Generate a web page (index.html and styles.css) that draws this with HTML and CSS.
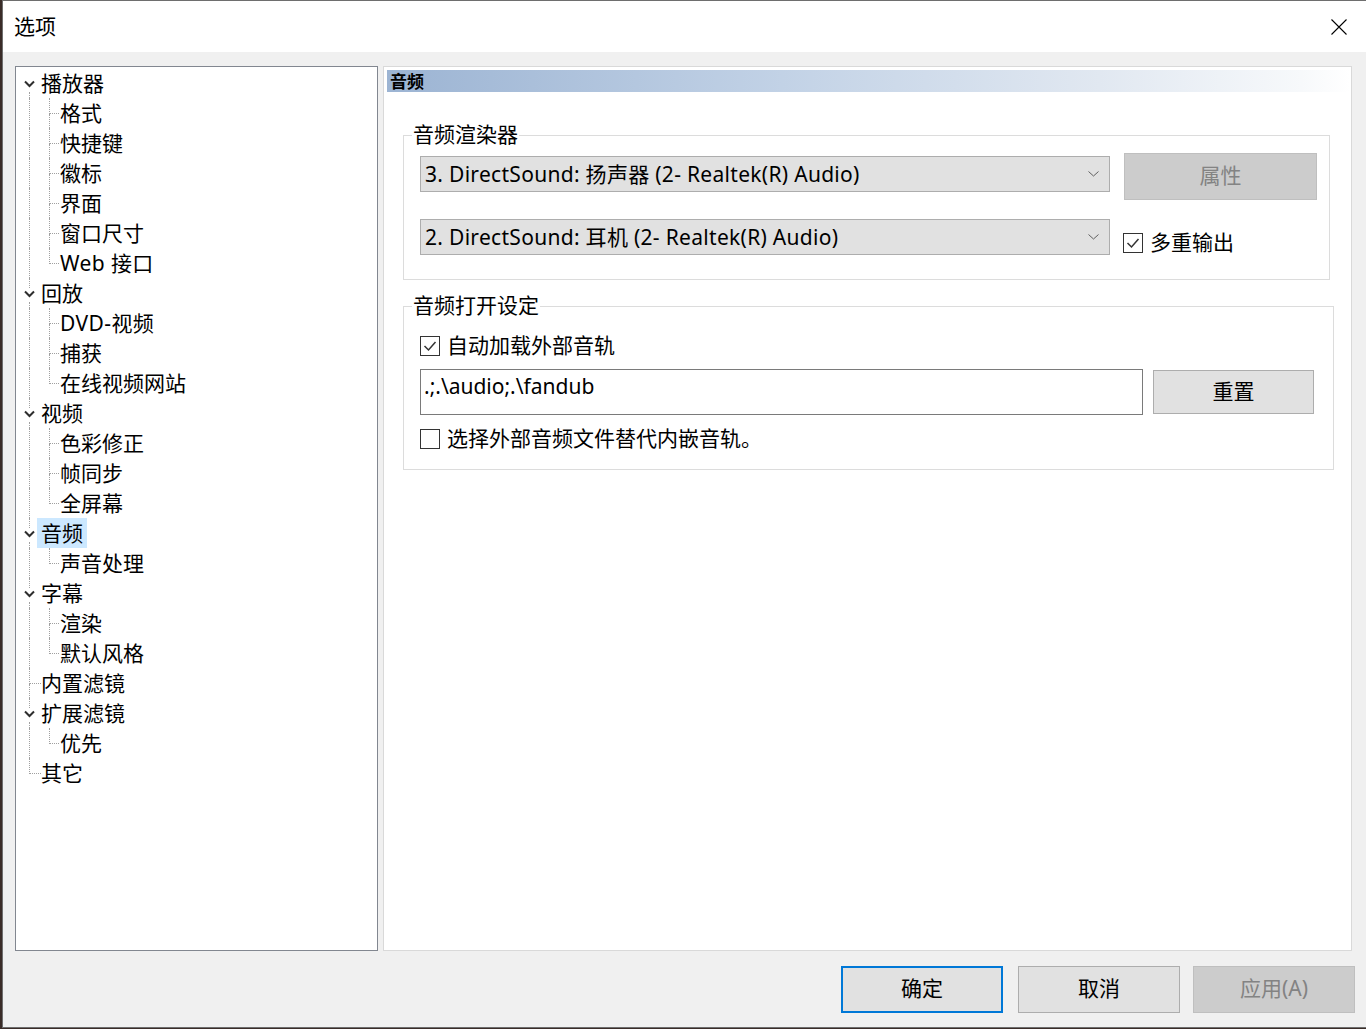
FILE: index.html
```html
<!DOCTYPE html>
<html lang="zh-CN">
<head>
<meta charset="utf-8">
<title>选项</title>
<link rel="stylesheet" href="styles.css">
</head>
<body>
<div class="window">
  <header class="titlebar">
    <span class="title">选项</span>
    <svg class="close" width="16" height="16" viewBox="0 0 16 16"><path d="M0.5 0.5 L15.5 15.5 M15.5 0.5 L0.5 15.5" stroke="#000" stroke-width="1.1" fill="none"/></svg>
  </header>
  <div class="client">
    <div class="main">
      <nav class="tree">
        <div class="node"><span class="g1 exp first"><i class="up"></i><svg class="chev" width="25" height="12" viewBox="0 0 25 12"><path d="M9 3.5 L13.5 8 L18 3.5" /></svg><i class="down"></i></span><span class="lbl">播放器</span></div>
        <div class="node"><span class="g1 pass"><i class="v"></i></span><span class="g2"><i class="h"></i><i class="v"></i></span><span class="lbl">格式</span></div>
        <div class="node"><span class="g1 pass"><i class="v"></i></span><span class="g2"><i class="h"></i><i class="v"></i></span><span class="lbl">快捷键</span></div>
        <div class="node"><span class="g1 pass"><i class="v"></i></span><span class="g2"><i class="h"></i><i class="v"></i></span><span class="lbl">徽标</span></div>
        <div class="node"><span class="g1 pass"><i class="v"></i></span><span class="g2"><i class="h"></i><i class="v"></i></span><span class="lbl">界面</span></div>
        <div class="node"><span class="g1 pass"><i class="v"></i></span><span class="g2"><i class="h"></i><i class="v"></i></span><span class="lbl">窗口尺寸</span></div>
        <div class="node"><span class="g1 pass"><i class="v"></i></span><span class="g2 last"><i class="h"></i><i class="v"></i></span><span class="lbl latin">Web 接口</span></div>

        <div class="node"><span class="g1 exp"><i class="up"></i><svg class="chev" width="25" height="12" viewBox="0 0 25 12"><path d="M9 3.5 L13.5 8 L18 3.5" /></svg><i class="down"></i></span><span class="lbl">回放</span></div>
        <div class="node"><span class="g1 pass"><i class="v"></i></span><span class="g2"><i class="h"></i><i class="v"></i></span><span class="lbl latin">DVD-视频</span></div>
        <div class="node"><span class="g1 pass"><i class="v"></i></span><span class="g2"><i class="h"></i><i class="v"></i></span><span class="lbl">捕获</span></div>
        <div class="node"><span class="g1 pass"><i class="v"></i></span><span class="g2 last"><i class="h"></i><i class="v"></i></span><span class="lbl">在线视频网站</span></div>

        <div class="node"><span class="g1 exp"><i class="up"></i><svg class="chev" width="25" height="12" viewBox="0 0 25 12"><path d="M9 3.5 L13.5 8 L18 3.5" /></svg><i class="down"></i></span><span class="lbl">视频</span></div>
        <div class="node"><span class="g1 pass"><i class="v"></i></span><span class="g2"><i class="h"></i><i class="v"></i></span><span class="lbl">色彩修正</span></div>
        <div class="node"><span class="g1 pass"><i class="v"></i></span><span class="g2"><i class="h"></i><i class="v"></i></span><span class="lbl">帧同步</span></div>
        <div class="node"><span class="g1 pass"><i class="v"></i></span><span class="g2 last"><i class="h"></i><i class="v"></i></span><span class="lbl">全屏幕</span></div>

        <div class="node"><span class="g1 exp"><i class="up"></i><svg class="chev" width="25" height="12" viewBox="0 0 25 12"><path d="M9 3.5 L13.5 8 L18 3.5" /></svg><i class="down"></i></span><span class="lbl selected">音频</span></div>
        <div class="node"><span class="g1 pass"><i class="v"></i></span><span class="g2 last"><i class="h"></i><i class="v"></i></span><span class="lbl">声音处理</span></div>

        <div class="node"><span class="g1 exp"><i class="up"></i><svg class="chev" width="25" height="12" viewBox="0 0 25 12"><path d="M9 3.5 L13.5 8 L18 3.5" /></svg><i class="down"></i></span><span class="lbl">字幕</span></div>
        <div class="node"><span class="g1 pass"><i class="v"></i></span><span class="g2"><i class="h"></i><i class="v"></i></span><span class="lbl">渲染</span></div>
        <div class="node"><span class="g1 pass"><i class="v"></i></span><span class="g2 last"><i class="h"></i><i class="v"></i></span><span class="lbl">默认风格</span></div>

        <div class="node"><span class="g1 leaf"><i class="h"></i><i class="v"></i></span><span class="lbl">内置滤镜</span></div>

        <div class="node"><span class="g1 exp"><i class="up"></i><svg class="chev" width="25" height="12" viewBox="0 0 25 12"><path d="M9 3.5 L13.5 8 L18 3.5" /></svg><i class="down"></i></span><span class="lbl">扩展滤镜</span></div>
        <div class="node"><span class="g1 pass"><i class="v"></i></span><span class="g2 last"><i class="h"></i><i class="v"></i></span><span class="lbl">优先</span></div>

        <div class="node"><span class="g1 leaf last"><i class="h"></i><i class="v"></i></span><span class="lbl">其它</span></div>
      </nav>

      <section class="page">
        <div class="page-header">音频</div>
        <div class="page-body">
          <div class="group renderer">
            <span class="legend">音频渲染器</span>
            <div class="row row-a">
              <div class="combo">
                <span class="ctext">3. DirectSound: 扬声器 (2- Realtek(R) Audio)</span>
                <svg class="drop" width="11" height="6" viewBox="0 0 11 6"><path d="M0.5 0.5 L5.5 5 L10.5 0.5"/></svg>
              </div>
              <button class="btn disabled prop">属性</button>
            </div>
            <div class="row row-b">
              <div class="combo">
                <span class="ctext">2. DirectSound: 耳机 (2- Realtek(R) Audio)</span>
                <svg class="drop" width="11" height="6" viewBox="0 0 11 6"><path d="M0.5 0.5 L5.5 5 L10.5 0.5"/></svg>
              </div>
              <label class="check multi"><span class="box"><svg width="18" height="18" viewBox="0 0 18 18"><path d="M3.5 9 L7.5 13 L14.5 5"/></svg></span><span class="ltext">多重输出</span></label>
            </div>
          </div>

          <div class="group open">
            <span class="legend">音频打开设定</span>
            <label class="check auto"><span class="box"><svg width="18" height="18" viewBox="0 0 18 18"><path d="M3.5 9 L7.5 13 L14.5 5"/></svg></span><span class="ltext">自动加载外部音轨</span></label>
            <div class="row row-path">
              <div class="edit">.;.\audio;.\fandub</div>
              <button class="btn reset">重置</button>
            </div>
            <label class="check replace"><span class="box"></span><span class="ltext">选择外部音频文件替代内嵌音轨。</span></label>
          </div>
        </div>
      </section>
    </div>

    <footer class="footer">
      <button class="btn default">确定</button>
      <button class="btn cancel">取消</button>
      <button class="btn disabled apply">应用(A)</button>
    </footer>
  </div>
</div>
</body>
</html>
```

FILE: styles.css
```css
* { box-sizing: border-box; }

html, body {
  margin: 0;
  padding: 0;
}

body {
  width: 1366px;
  height: 1029px;
  overflow: hidden;
  background: #3a2c28;
  font-family: "Noto Sans", "Noto Sans CJK SC", sans-serif;
  font-size: 21px;
  color: #000;
}

.window {
  margin-left: 2px;
  height: 1028px;
  border: 1px solid #6e6e6e;
  border-right: none;
  background: #f0f0f0;
  display: flex;
  flex-direction: column;
}

/* title bar */
.titlebar {
  height: 51px;
  flex: none;
  background: #fff;
  display: flex;
  align-items: center;
  justify-content: space-between;
  padding: 0 19px 0 11px;
}

.title {
  font-family: "Noto Sans CJK SC", sans-serif;
  font-size: 21px;
  line-height: 30px;
  padding-bottom: 3px;
}

.close {
  display: block;
  margin-top: 1px;
}

.client {
  flex: 1;
  display: flex;
  flex-direction: column;
}

.main {
  display: flex;
  gap: 5px;
  padding: 14px 0 0 12px;
}

/* tree */
.tree {
  width: 363px;
  height: 885px;
  flex: none;
  background: #fff;
  border: 1px solid #828790;
  padding-top: 1px;
}

.node {
  display: flex;
  height: 30px;
}

.g1 {
  width: 25px;
  flex: none;
  display: flex;
  flex-direction: column;
}

.g2 {
  width: 19px;
  flex: none;
  display: flex;
  flex-direction: column;
}

.g1 i, .g2 i {
  display: block;
  border-left: 1px dotted #a0a0a0;
}

.g1 .v, .g1 .up, .g1 .down, .g1 .h { margin-left: 13px; }
.g2 .v, .g2 .h { margin-left: 8px; }

.g1.pass .v { flex: 1; }

.g1.exp .up { height: 10px; }
.g1.exp.first .up { border-left-color: transparent; }
.g1.exp .down { flex: 1; margin-top: 2px; }

.chev {
  display: block;
  flex: none;
}
.chev path {
  fill: none;
  stroke: #2e2e2e;
  stroke-width: 2;
}

.g1.leaf .h {
  height: 16px;
  width: 12px;
  border-bottom: 1px dotted #a0a0a0;
}
.g1.leaf .v { flex: 1; }
.g1.leaf.last .v { border-left-color: transparent; }

.g2 .h {
  height: 16px;
  width: 10px;
  border-bottom: 1px dotted #a0a0a0;
}
.g2 .v { flex: 1; }
.g2.last .v { border-left-color: transparent; }

.lbl {
  display: block;
  padding: 0 4px;
  margin-left: -4px;
  line-height: 30px;
  white-space: nowrap;
}

.lbl.latin {
  letter-spacing: 0.4px;
}

.lbl.selected {
  background: #cce8ff;
}

/* page */
.page {
  width: 969px;
  height: 885px;
  flex: none;
  background: #fff;
  border: 1px solid #d9d9d9;
}

.page-header {
  margin: 3px 1px 0 3px;
  height: 22px;
  padding-left: 3px;
  font-family: "Noto Sans CJK SC", sans-serif;
  font-weight: bold;
  font-size: 17px;
  line-height: 21px;
  background: linear-gradient(to right, #9cb4d3 0%, #c2d2e6 41%, #e1e8f1 74%, #f7f9fb 95%, #ffffff 100%);
}

.page-body {
  padding: 43px 0 0 19px;
}

.group {
  position: relative;
  border: 1px solid #dcdcdc;
}

.legend {
  position: absolute;
  left: 8px;
  top: -18px;
  padding: 0 1px;
  background: #fff;
  line-height: 30px;
  font-family: "Noto Sans CJK SC", sans-serif;
}

.renderer {
  width: 927px;
  height: 145px;
  padding: 17px 0 0 16px;
}

.row {
  display: flex;
  align-items: flex-start;
}

.combo {
  width: 690px;
  height: 36px;
  flex: none;
  background: #e1e1e1;
  border: 1px solid #adadad;
  display: flex;
  align-items: center;
  justify-content: space-between;
  padding: 0 10px 0 4px;
  white-space: nowrap;
}

.ctext {
  letter-spacing: 0.3px;
  padding-bottom: 2px;
}

.row-a .combo { margin-top: 3px; }

.drop path {
  fill: none;
  stroke: #606060;
  stroke-width: 1;
}

.btn {
  font: inherit;
  font-family: "Noto Sans", "Noto Sans CJK SC", sans-serif;
  font-size: 21px;
  color: #000;
  background: #e1e1e1;
  border: 1px solid #adadad;
  padding: 0 0 2px;
  margin: 0;
  line-height: 1;
}

.btn.disabled {
  background: #cccccc;
  border-color: #bfbfbf;
  color: #838383;
}

.btn.default {
  border: 2px solid #0078d7;
}

.prop {
  width: 193px;
  height: 47px;
  margin-left: 14px;
}

.row-b {
  margin-top: 19px;
}

.check {
  display: flex;
  align-items: center;
  gap: 7px;
  height: 30px;
  white-space: nowrap;
  font-family: "Noto Sans CJK SC", sans-serif;
}

.ltext {
  line-height: 27px;
  padding-bottom: 3px;
}

.box {
  width: 20px;
  height: 20px;
  flex: none;
  border: 1px solid #333;
  background: #fff;
  display: flex;
  align-items: center;
  justify-content: center;
}

.box svg path {
  fill: none;
  stroke: #333;
  stroke-width: 1.5;
}

.multi {
  margin: 9px 0 0 13px;
}

.open {
  margin-top: 26px;
  width: 931px;
  height: 164px;
  padding: 24px 0 0 16px;
}

.row-path {
  margin-top: 8px;
}

.edit {
  width: 723px;
  height: 46px;
  flex: none;
  border: 1px solid #7a7a7a;
  background: #fff;
  padding: 0 3px;
  line-height: 32px;
  white-space: nowrap;
}

.reset {
  width: 161px;
  height: 44px;
  margin: 1px 0 0 10px;
}

.replace {
  margin-top: 9px;
}

/* footer */
.footer {
  flex: 1;
  display: flex;
  justify-content: flex-end;
  align-items: flex-start;
  padding: 15px 11px 0 0;
}

.footer .btn {
  width: 162px;
  height: 47px;
}

.footer .cancel { margin-left: 15px; }
.footer .apply { margin-left: 13px; }
```
